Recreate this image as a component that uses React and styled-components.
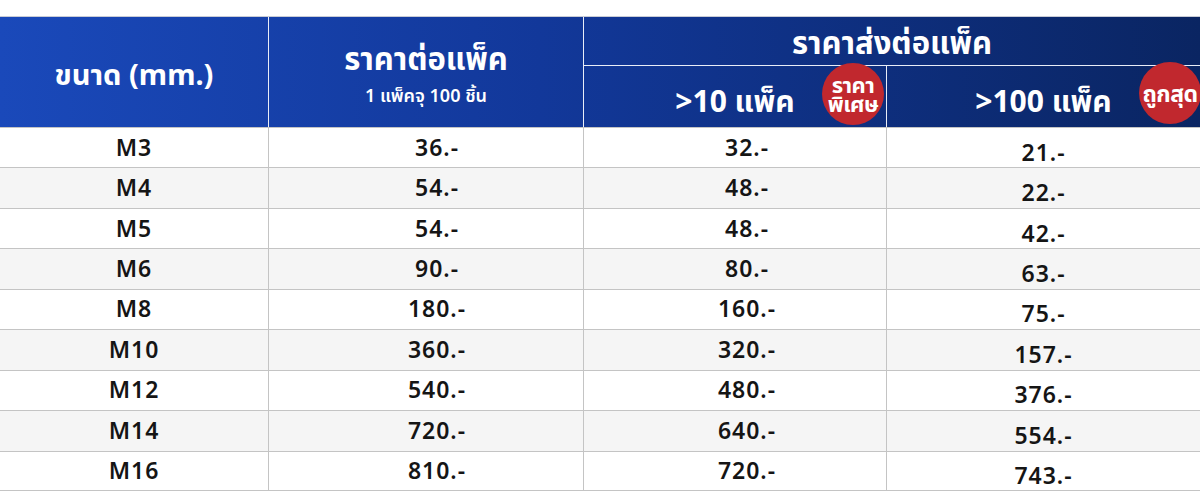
import styled, { createGlobalStyle } from "styled-components";

const GlobalStyle = createGlobalStyle`
  html, body {
    margin: 0;
    padding: 0;
    background: #ffffff;
    font-family: "Noto Sans", "Noto Sans Thai", "DejaVu Sans", sans-serif;
  }
`;

const Page = styled.div`
  width: 1200px;
  height: 500px;
  padding-top: 16px;
  box-sizing: border-box;
  overflow: hidden;
`;

const cols = "268px 315px 303px 314px";

const Header = styled.div`
  display: grid;
  grid-template-columns: ${cols};
  grid-template-rows: 49px 61px;
  background: linear-gradient(90deg, #1a49ba 0%, #12389a 45%, #0a2562 100%);
  border-top: 1px solid #c9ccd6;
  color: #ffffff;
`;

const HeadCell = styled.div`
  position: relative;
  display: flex;
  flex-direction: column;
  align-items: center;
  justify-content: center;
  grid-row: ${(p) => p.row || "auto"};
  grid-column: ${(p) => p.col || "auto"};
  border-left: ${(p) => (p.first ? "none" : "1px solid #e9edf7")};
  border-bottom: ${(p) => (p.divide ? "1px solid #e9edf7" : "none")};
  padding-top: ${(p) => p.pt || 0}px;
  font-weight: 700;
  font-size: ${(p) => p.size || 31}px;
  line-height: 1;
  white-space: nowrap;
`;

const SubTitle = styled.div`
  font-size: 18px;
  font-weight: 600;
  margin-top: 12px;
`;

const Badge = styled.span`
  position: absolute;
  top: ${(p) => p.top}px;
  right: ${(p) => p.right}px;
  width: 62px;
  height: 62px;
  border-radius: 50%;
  background: #c1282e;
  color: #ffffff;
  display: flex;
  flex-direction: column;
  align-items: center;
  justify-content: center;
  font-size: ${(p) => p.size}px;
  font-weight: 700;
  line-height: 0.88;
  letter-spacing: -0.5px;
`;

const Body = styled.div`
  display: grid;
  grid-template-columns: ${cols};
  grid-auto-rows: 40.44px;
`;

const Cell = styled.div`
  display: flex;
  align-items: center;
  justify-content: center;
  padding: ${(p) => (p.low ? "9px" : "0")} 0 ${(p) => (p.low ? "0" : "1px")}
    ${(p) => p.shift || 0}px;
  background: ${(p) => (p.striped ? "#f5f5f5" : "#ffffff")};
  border-left: ${(p) => (p.first ? "none" : "1px solid #c4c4c4")};
  border-top: 1px solid #c4c4c4;
  border-bottom: ${(p) => (p.last ? "1px solid #c4c4c4" : "none")};
  font-size: 23px;
  font-weight: 600;
  letter-spacing: 1px;
  color: #151515;
  line-height: 1;
  box-sizing: border-box;
`;

const shifts = [0, 22, 24, 0];

const rows = [
  ["M3", "36.-", "32.-", "21.-"],
  ["M4", "54.-", "48.-", "22.-"],
  ["M5", "54.-", "48.-", "42.-"],
  ["M6", "90.-", "80.-", "63.-"],
  ["M8", "180.-", "160.-", "75.-"],
  ["M10", "360.-", "320.-", "157.-"],
  ["M12", "540.-", "480.-", "376.-"],
  ["M14", "720.-", "640.-", "554.-"],
  ["M16", "810.-", "720.-", "743.-"],
];

export default function App() {
  return (
    <Page>
      <GlobalStyle />
      <Header>
        <HeadCell first row="1 / 3" col="1" size={29} pt={2}>
          ขนาด (mm.)
        </HeadCell>
        <HeadCell row="1 / 3" col="2" pt={2}>
          ราคาต่อแพ็ค
          <SubTitle>1 แพ็คจุ 100 ชิ้น</SubTitle>
        </HeadCell>
        <HeadCell row="1" col="3 / 5" divide pt={2}>
          ราคาส่งต่อแพ็ค
        </HeadCell>
        <HeadCell row="2" col="3" size={30} pt={8}>
          &gt;10 แพ็ค
          <Badge top={-3} right={2} size={22}>
            <span>ราคา</span>
            <span>พิเศษ</span>
          </Badge>
        </HeadCell>
        <HeadCell row="2" col="4" size={30} pt={8}>
          &gt;100 แพ็ค
          <Badge top={-4} right={-1} size={23}>
            ถูกสุด
          </Badge>
        </HeadCell>
      </Header>
      <Body>
        {rows.map((r, i) =>
          r.map((v, j) => (
            <Cell
              key={`${r[0]}_${j}`}
              first={j === 0}
              low={j === 3}
              shift={shifts[j]}
              striped={i % 2 === 1}
              last={i === rows.length - 1}
            >
              {v}
            </Cell>
          ))
        )}
      </Body>
    </Page>
  );
}
